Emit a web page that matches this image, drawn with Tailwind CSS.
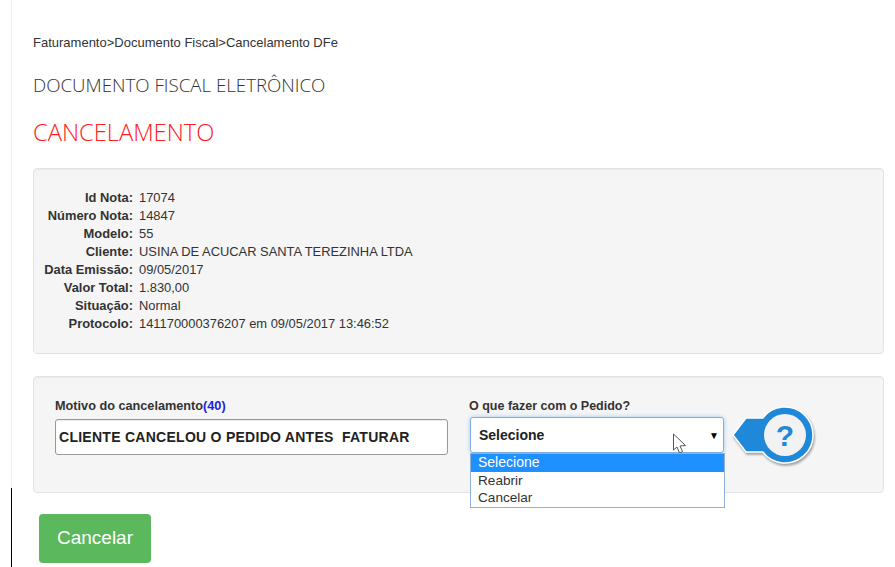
<!DOCTYPE html>
<html lang="pt-BR">
<head>
  <meta charset="UTF-8">
  <title>Cancelamento DFe</title>
  <script src="https://cdn.jsdelivr.net/npm/@tailwindcss/browser@4"></script>
</head>
<body class="bg-white h-[567px] overflow-hidden font-['Liberation_Sans',Arial,sans-serif] text-[13px] text-[#333]">
  <div class="relative ml-[11px] h-[567px] border-l border-[#eeeeee] pl-[21px] pr-[11px] pt-[36px]">
    <!-- black edge at the bottom of the sidebar line -->
    <div class="absolute left-[-1px] top-[488px] h-[79px] w-px bg-black"></div>

    <div class="leading-[14px] text-[#333]">Faturamento&gt;Documento Fiscal&gt;Cancelamento DFe</div>
    <h3 class="mt-[22px] font-['Open_Sans',sans-serif] text-[18.7px] leading-[26px] font-light text-[#333]">DOCUMENTO FISCAL ELETRÔNICO</h3>
    <h2 class="mt-[19px] font-['Open_Sans',sans-serif] text-[23.7px] leading-[30px] font-light text-[#ff2020]">CANCELAMENTO</h2>

    <!-- dados da nota -->
    <div class="mt-[21px] h-[186px] rounded border border-[#e3e3e3] bg-[#f5f5f5] pt-[20px] shadow-[inset_0_1px_1px_rgba(0,0,0,0.05)]">
      <div class="grid grid-cols-[99px_1fr] gap-x-[6px] text-[12.9px] leading-[18px]">
        <b class="text-right whitespace-nowrap">Id Nota:</b><span>17074</span>
        <b class="text-right whitespace-nowrap">Número Nota:</b><span>14847</span>
        <b class="text-right whitespace-nowrap">Modelo:</b><span>55</span>
        <b class="text-right whitespace-nowrap">Cliente:</b><span>USINA DE ACUCAR SANTA TEREZINHA LTDA</span>
        <b class="text-right whitespace-nowrap">Data Emissão:</b><span>09/05/2017</span>
        <b class="text-right whitespace-nowrap">Valor Total:</b><span>1.830,00</span>
        <b class="text-right whitespace-nowrap">Situação:</b><span>Normal</span>
        <b class="text-right whitespace-nowrap">Protocolo:</b><span>141170000376207 em 09/05/2017 13:46:52</span>
      </div>
    </div>

    <!-- motivo -->
    <div class="mt-[22px] flex h-[117px] gap-[21px] rounded border border-[#e3e3e3] bg-[#f5f5f5] pl-[21px] pt-[22px] shadow-[inset_0_1px_1px_rgba(0,0,0,0.05)]">
      <div class="w-[393px]">
        <div class="text-[12.7px] font-bold leading-[14px]">Motivo do cancelamento<span class="text-[#2222dd]">(40)</span></div>
        <div class="mt-[6px] flex h-[36px] items-center rounded-[3px] border border-[#999] bg-white pl-[3px] text-[14px] font-bold tracking-[0.27px] whitespace-pre text-[#222] shadow-[inset_0_1px_1px_rgba(0,0,0,0.08)]">CLIENTE CANCELOU O PEDIDO ANTES  FATURAR</div>
      </div>
      <div class="flex w-[350px] gap-[8px]">
        <div class="relative w-[255px] shrink-0">
          <div class="text-[12.5px] font-bold leading-[14px]">O que fazer com o Pedido?</div>
          <div class="relative ml-px mt-[4px] flex h-[36px] items-center justify-between rounded-[3px] border border-[#7fb0e0] bg-white pl-[8px] pr-[4px] text-[14px] font-bold text-[#222] shadow-[0_0_4px_rgba(102,175,233,0.6)]">
            <span>Selecione</span>
            <span class="text-[10px] text-black">▼</span>
            <!-- mouse pointer -->
            <svg class="absolute left-[201px] top-[15px]" width="15" height="23" viewBox="0 0 15 23">
              <path d="M1.5 1 L1.5 17 L5 14 L7.5 20 L10.5 18.5 L8 13 L13.5 12.5 Z" fill="#fff" stroke="#555" stroke-width="1"/>
            </svg>
          </div>
          <!-- opened options -->
          <div class="absolute left-px top-[54px] z-10 h-[55px] w-[255px] border border-[#8fb0dc] bg-white text-[13.6px] leading-[17px] text-[#333]">
            <div class="bg-[#1e90ff] pl-[7px] pb-px text-[14px] leading-[17px] text-white">Selecione</div>
            <div class="pl-[7px]">Reabrir</div>
            <div class="pl-[7px]">Cancelar</div>
          </div>
        </div>
        <!-- help marker -->
        <svg class="mt-[7px] shrink-0" width="86" height="64" viewBox="0 0 86 64">
          <g style="filter: drop-shadow(1px 2px 1px rgba(0,0,0,0.35))">
            <path d="M1 29 L14 12 H30.8 A28 28 0 1 1 30.8 46 H14 Z" fill="#2088d8" stroke="#fff" stroke-width="1.5" stroke-linejoin="round"/>
          </g>
          <circle cx="53" cy="29" r="21" fill="#f2f2f2"/>
          <text x="53" y="40" text-anchor="middle" font-family="'Liberation Sans',sans-serif" font-size="30" font-weight="700" fill="#2088d8">?</text>
        </svg>
      </div>
    </div>

    <button class="mt-[21px] ml-[6px] h-[49px] w-[112px] rounded bg-[#5cb85c] text-[19px] text-white">Cancelar</button>
  </div>
</body>
</html>
